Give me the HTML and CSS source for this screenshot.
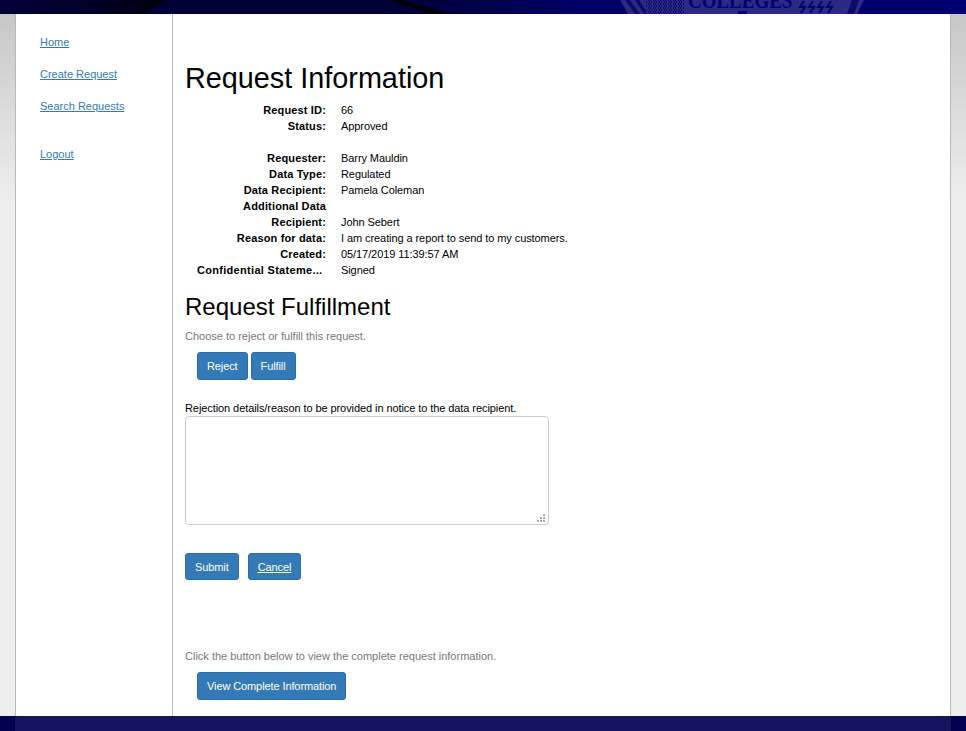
FILE: index.html
```html
<!DOCTYPE html>
<html lang="en">
<head>
    <meta charset="UTF-8">
    <title>Request Information</title>
    <link rel="stylesheet" href="styles.css">
</head>
<body>
    <header class="banner">
        <svg class="banner-art" width="966" height="14" viewBox="0 0 966 14" aria-hidden="true">
            <defs>
                <linearGradient id="wedge" x1="0" x2="1" y1="0" y2="0">
                    <stop offset="0" stop-color="#000038"/>
                    <stop offset="0.55" stop-color="#000028"/>
                    <stop offset="1" stop-color="#00000c"/>
                </linearGradient>
                <pattern id="weave" width="5" height="4" patternUnits="userSpaceOnUse">
                    <rect width="5" height="4" fill="#2b2b85"/>
                    <path d="M0 0 L2 2 L0 4 M3 0 L5 2 L3 4" fill="none" stroke="#0c0c68" stroke-width="1"/>
                </pattern>
            </defs>
            <path d="M0 0 H167 L143 14 H0 Z" fill="url(#wedge)"/>
            <path d="M390 0 H402 L452 14 H430 Z" fill="#00000a"/>
            <path d="M620 0 H864 L857 14 H628 Z" fill="#2b2b85"/>
            <path d="M625 0 H630 L640 14 H635 Z M635 0 H639 L648 14 H644 Z" fill="#0c0c68"/>
            <rect x="646" y="0" width="38" height="14" fill="url(#weave)"/>
            <path d="M852 0 H859 L854 14 H847 Z" fill="#0c0c68"/>
            <path d="M804 1 L800 7 H805 L801 13 M813 1 L809 7 H814 L810 13 M822 1 L818 7 H823 L819 13 M831 1 L827 7 H832 L828 13" fill="none" stroke="#000070" stroke-width="2"/>
            <rect x="738" y="11" width="9" height="3" fill="#000070"/>
        </svg>
        <span class="banner-seal">COLLEGES</span>
    </header>
    <div class="page">
        <nav class="sidebar">
            <a href="#">Home</a>
            <a href="#">Create Request</a>
            <a href="#">Search Requests</a>
            <a href="#" class="logout">Logout</a>
        </nav>
        <main class="content">
            <h1>Request Information</h1>
            <dl class="details">
                <dt>Request ID:</dt><dd>66</dd>
                <dt>Status:</dt><dd>Approved</dd>
                <dt class="spacer"></dt><dd></dd>
                <dt>Requester:</dt><dd>Barry Mauldin</dd>
                <dt>Data Type:</dt><dd>Regulated</dd>
                <dt>Data Recipient:</dt><dd>Pamela Coleman</dd>
                <dt class="wrap">Additional Data Recipient:</dt><dd class="low">John Sebert</dd>
                <dt>Reason for data:</dt><dd>I am creating a report to send to my customers.</dd>
                <dt>Created:</dt><dd>05/17/2019 11:39:57 AM</dd>
                <dt class="cut">Confidential Stateme...</dt><dd>Signed</dd>
            </dl>
            <h2>Request Fulfillment</h2>
            <p class="hint">Choose to reject or fulfill this request.</p>
            <div class="actions">
                <button class="btn">Reject</button>
                <button class="btn">Fulfill</button>
            </div>
            <label class="reason-label" for="reason">Rejection details/reason to be provided in notice to the data recipient.</label>
            <textarea id="reason" class="reason"></textarea>
            <div class="form-buttons">
                <button class="btn">Submit</button>
                <a href="#" class="btn">Cancel</a>
            </div>
            <p class="hint view-hint">Click the button below to view the complete request information.</p>
            <div class="actions">
                <button class="btn">View Complete Information</button>
            </div>
        </main>
    </div>
    <footer class="bottom">
        <div class="bottom-bar"></div>
    </footer>
</body>
</html>
```
FILE: styles.css
```css
html, body {
    height: 100%;
}
body {
    margin: 0;
    display: flex;
    flex-direction: column;
    overflow: hidden;
    font-family: "Liberation Sans", Arial, sans-serif;
    font-size: 11px;
    line-height: 16px;
    color: #000;
    background: linear-gradient(#c4c4c4, #eeeeee 200px);
}
.banner {
    height: 14px;
    flex: none;
    position: relative;
    overflow: hidden;
    background: linear-gradient(90deg, #000038 0, #000038 400px, #000050 500px, #000066 580px, #000070 100%);
}
.banner-art {
    position: absolute;
    left: 0;
    top: 0;
}
.banner-seal {
    position: absolute;
    left: 688px;
    top: -12px;
    font-family: "Liberation Serif", serif;
    font-weight: bold;
    font-size: 24px;
    line-height: 24px;
    color: #000070;
    transform: scaleX(0.79);
    transform-origin: left top;
}
.page {
    flex: 1;
    min-height: 0;
    display: flex;
    margin: 0 15px;
    background: #fff;
    border-left: 1px solid #b8b8b8;
    border-right: 1px solid #b8b8b8;
}
.sidebar {
    width: 132px;
    flex: none;
    padding: 20px 0 0 24px;
    border-right: 1px solid #b8b8b8;
}
.sidebar a {
    display: block;
    width: max-content;
    margin-bottom: 16px;
    color: #337ab7;
}
.sidebar .logout {
    margin-top: 32px;
}
.content {
    flex: 1;
    min-width: 0;
    padding: 0 12px;
}
h1 {
    margin: 47px 0 7px;
    font-size: 28.8px;
    line-height: 34px;
    font-weight: normal;
}
h2 {
    margin: 15px 0 7px;
    font-size: 24px;
    line-height: 28px;
    font-weight: normal;
}
.details {
    margin: 0;
    padding-left: 12px;
    display: grid;
    grid-template-columns: 129px auto;
    column-gap: 15px;
    justify-content: start;
}
.details dt {
    font-weight: bold;
    letter-spacing: 0.15px;
    text-align: right;
    white-space: nowrap;
}
.details .wrap {
    white-space: normal;
    padding-left: 20px;
}
.details .cut {
    text-align: left;
    letter-spacing: 0.3px;
}
.details .spacer {
    height: 16px;
}
.details dd {
    margin: 0;
    letter-spacing: -0.08px;
}
.details .low {
    align-self: end;
}
.hint {
    margin: 0;
    color: #777;
}
.actions {
    padding-left: 12px;
    margin-top: 8px;
    display: flex;
    gap: 3px;
}
.btn {
    display: inline-block;
    padding: 5px 9px;
    font-family: inherit;
    font-size: 11px;
    line-height: 16px;
    letter-spacing: -0.1px;
    color: #fff;
    background: #337ab7;
    border: 1px solid #2e6da4;
    border-radius: 3px;
}
.reason-label {
    display: block;
    margin-top: 20px;
    letter-spacing: -0.08px;
}
/* grip is drawn by hand, the native one looks different */
.reason {
    display: block;
    box-sizing: border-box;
    width: 364px;
    height: 109px;
    border: 1px solid #ccc;
    border-radius: 4px;
    resize: none;
    background-color: #fff;
    background-image:
        linear-gradient(#aaa, #aaa), linear-gradient(#aaa, #aaa), linear-gradient(#aaa, #aaa),
        linear-gradient(#aaa, #aaa), linear-gradient(#aaa, #aaa), linear-gradient(#aaa, #aaa);
    background-size: 2px 2px;
    background-repeat: no-repeat;
    background-position:
        right 3px bottom 2px, right 6px bottom 2px, right 9px bottom 2px,
        right 3px bottom 5px, right 6px bottom 5px,
        right 3px bottom 8px;
}
.form-buttons {
    margin-top: 28px;
    display: flex;
    gap: 9px;
}
.form-buttons .btn {
    padding-bottom: 4px;
}
.view-hint {
    margin-top: 68px;
}
.bottom {
    height: 15px;
    flex: none;
    background: #00004f;
}
.bottom-bar {
    height: 100%;
    margin: 0 15px;
    background: #14145f;
}
```
